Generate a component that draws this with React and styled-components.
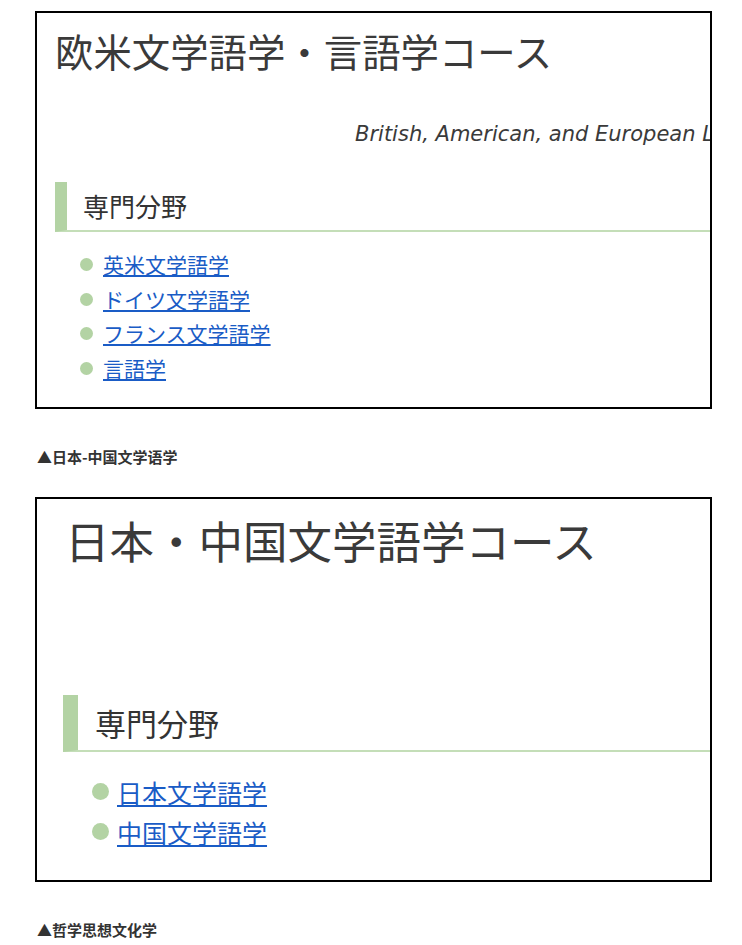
import React from "react";
import styled, { createGlobalStyle } from "styled-components";

const Global = createGlobalStyle`
  html, body { margin: 0; padding: 0; background: #fff; }
  body { font-family: "Noto Sans CJK JP", "Noto Sans", sans-serif; color: #333; }
  * { box-sizing: border-box; }
`;

const Page = styled.div`
  padding: 11px 0 0 35px;
  width: 742px;
`;

const Card = styled.div`
  width: 677px;
  border: 2px solid #000;
  overflow: hidden;
  padding-top: ${(p) => p.$padTop}px;
  padding-bottom: ${(p) => p.$padBottom}px;
`;

const Title = styled.h1`
  margin: 0;
  padding-left: ${(p) => p.$indent}px;
  font-size: ${(p) => p.$size}px;
  line-height: ${(p) => p.$lh}px;
  font-weight: 400;
  color: #3a3a3a;
  white-space: nowrap;
`;

const Subtitle = styled.p`
  margin: ${(p) => p.$gap}px 0 0;
  padding-left: 318px;
  font-family: "DejaVu Sans", Verdana, sans-serif;
  font-style: italic;
  font-size: 21px;
  line-height: 24px;
  color: #3a3a3a;
  white-space: nowrap;
`;

const Heading = styled.h2`
  margin: ${(p) => p.$gap}px 0 0 ${(p) => p.$indent}px;
  height: ${(p) => p.$height}px;
  border-left: ${(p) => p.$bar}px solid #b3d3a4;
  border-bottom: 2px solid #c4deb8;
  padding-left: ${(p) => p.$pad}px;
  font-size: ${(p) => p.$size}px;
  line-height: ${(p) => p.$height - 2}px;
  font-weight: 400;
  color: #333;
  white-space: nowrap;
`;

const List = styled.ul`
  list-style: none;
  margin: ${(p) => p.$gap}px 0 0;
  padding: 0 0 0 ${(p) => p.$indent}px;
`;

const Item = styled.li`
  display: flex;
  align-items: center;
  gap: ${(p) => p.$gap}px;
  height: ${(p) => p.$lh}px;
`;

const Dot = styled.span`
  flex: none;
  width: ${(p) => p.$size}px;
  height: ${(p) => p.$size}px;
  border-radius: 50%;
  background: #b3d3a4;
`;

const Link = styled.a`
  font-size: ${(p) => p.$size}px;
  line-height: ${(p) => p.$lh}px;
  color: #1a5cc6;
  text-decoration: underline;
  text-underline-offset: 2px;
  white-space: nowrap;
`;

const Caption = styled.p`
  margin: 38px 0 ${(p) => p.$after}px 2px;
  font-family: "Noto Sans CJK SC", "Noto Sans", sans-serif;
  font-weight: 700;
  font-size: 15px;
  line-height: 20px;
  color: #333;
`;

const cards = [
  {
    title: "欧米文学語学・言語学コース",
    subtitle: "British, American, and European Literature and Linguistics",
    padTop: 14,
    padBottom: 21,
    title_: { size: 38.4, lh: 46, indent: 18 },
    sub: 49,
    heading: { gap: 36, indent: 18, height: 50, bar: 12, pad: 16, size: 26 },
    list: { gap: 15, indent: 43, lh: 34.7, dot: 13, dotGap: 10, size: 21 },
    items: ["英米文学語学", "ドイツ文学語学", "フランス文学語学", "言語学"],
  },
  {
    title: "日本・中国文学語学コース",
    padTop: 15,
    padBottom: 28,
    title_: { size: 44.5, lh: 52, indent: 28 },
    heading: { gap: 129, indent: 26, height: 57, bar: 15, pad: 17, size: 31 },
    list: { gap: 20, indent: 55, lh: 40, dot: 17, dotGap: 8, size: 25 },
    items: ["日本文学語学", "中国文学語学"],
  },
];

function CourseCard({ c }) {
  return (
    <Card $padTop={c.padTop} $padBottom={c.padBottom}>
      <Title $size={c.title_.size} $lh={c.title_.lh} $indent={c.title_.indent}>
        {c.title}
      </Title>
      {c.subtitle && <Subtitle $gap={c.sub}>{c.subtitle}</Subtitle>}
      <Heading
        $gap={c.heading.gap}
        $indent={c.heading.indent}
        $height={c.heading.height}
        $bar={c.heading.bar}
        $pad={c.heading.pad}
        $size={c.heading.size}
      >
        専門分野
      </Heading>
      <List $gap={c.list.gap} $indent={c.list.indent}>
        {c.items.map((it) => (
          <Item key={it} $lh={c.list.lh} $gap={c.list.dotGap}>
            <Dot $size={c.list.dot} />
            <Link href="#" $size={c.list.size} $lh={c.list.lh}>
              {it}
            </Link>
          </Item>
        ))}
      </List>
    </Card>
  );
}

export default function App() {
  return (
    <>
      <Global />
      <Page>
        <CourseCard c={cards[0]} />
        <Caption $after={30}>▲日本-中国文学语学</Caption>
        <CourseCard c={cards[1]} />
        <Caption $after={0}>▲哲学思想文化学</Caption>
      </Page>
    </>
  );
}
